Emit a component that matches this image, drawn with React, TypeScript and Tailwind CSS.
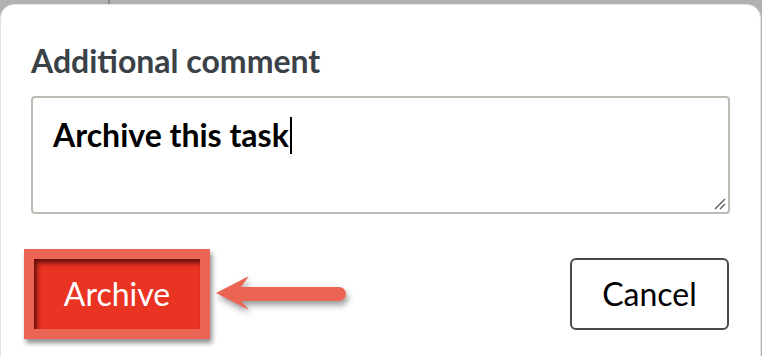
import React from "react";

export default function App() {
  return (
    <div className="w-[762px] h-[356px] overflow-hidden bg-[#b1b1b1] relative" style={{ fontFamily: "Lato, 'Open Sans', sans-serif" }}>
      <div className="absolute left-[108px] top-0 w-[2px] h-[6px] bg-[#8a8a8a]" />
      <div className="relative mt-[4px] ml-0 w-[761px] h-[372px] bg-white rounded-[14px] border border-[#e2e2e2] pl-[30px] pr-[31px] pt-[37px]">
        <div className="text-[32px] leading-[38px] font-bold text-[#3b4247]">Additional comment</div>
        <div className="relative mt-[16px] h-[118px] w-[699px] border-2 border-[#bcbcb4] rounded-[4px] pl-[20px] pt-[17px]">
          <div className="flex items-center text-[32px] leading-[40px] font-bold text-black">
            <span>Archive this task</span>
            <span className="inline-block w-[2px] h-[37px] bg-black ml-[1px]" />
          </div>
          <svg className="absolute right-[2px] bottom-[2px]" width="14" height="14" viewBox="0 0 14 14">
            <line x1="3" y1="13" x2="13" y2="3" stroke="#555" strokeWidth="1.3" />
            <line x1="8" y1="13" x2="13" y2="8" stroke="#555" strokeWidth="1.3" />
          </svg>
        </div>
        <div className="flex items-center justify-between mt-[35px]">
          <div className="relative ml-[-7px] p-[10px] bg-[#ec6453] shadow-[2px_4px_5px_rgba(0,0,0,0.45)]">
            <button className="w-[166px] h-[70px] bg-[#e93323] text-white text-[32px] font-normal shadow-[inset_3px_4px_4px_rgba(80,10,5,0.85)]">
              Archive
            </button>
            <svg className="absolute left-[190px] top-[24px]" width="140" height="44" viewBox="0 0 140 44" style={{ filter: "drop-shadow(2px 4px 3px rgba(0,0,0,0.4))" }}>
              <path d="M2 20 L35 3 L27 14 L125 14 A7 7 0 0 1 125 28 L27 28 L35 37 Z" fill="#ec6453" />
            </svg>
          </div>
          <button className="w-[159px] h-[72px] border-2 border-[#4a4a4a] rounded-[6px] bg-white text-black text-[32px] font-normal mr-0">
            Cancel
          </button>
        </div>
      </div>
    </div>
  );
}
